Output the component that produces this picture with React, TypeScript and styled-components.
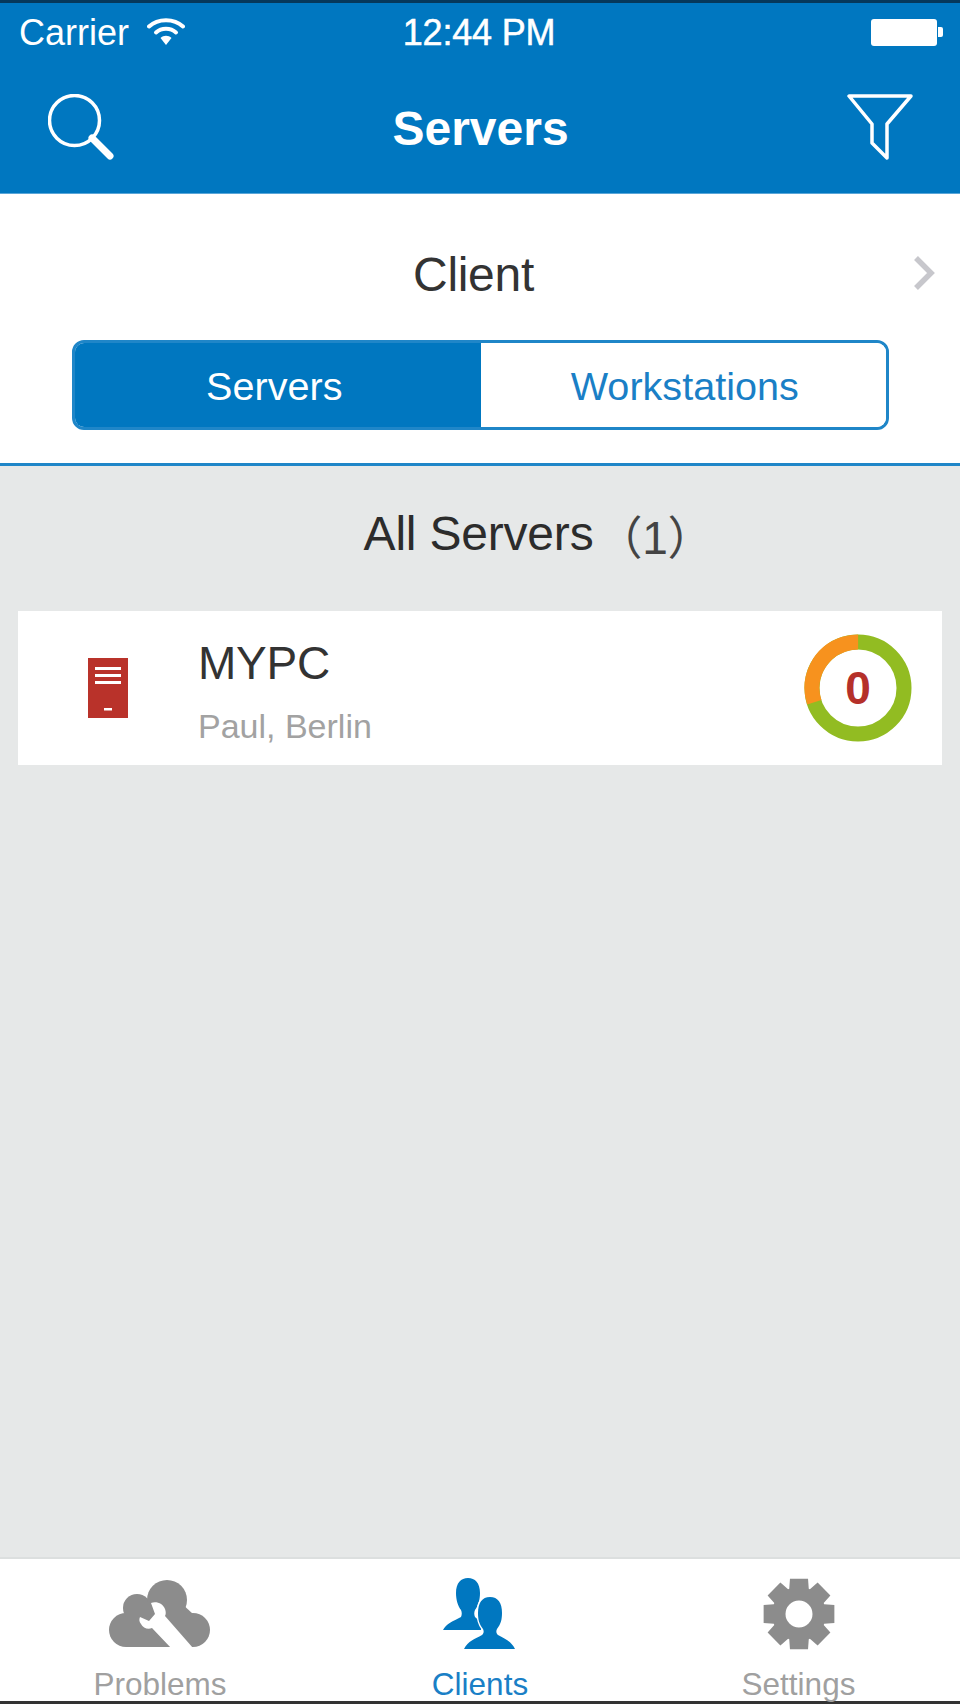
import React from "react";
import styled, { createGlobalStyle } from "styled-components";

const FONT = `"Liberation Sans", "Noto Sans CJK SC", Arial, sans-serif`;
const BLUE = "#0077c0";
const GREY_ICON = "#8c8c8c";

const Global = createGlobalStyle`
  html, body { margin: 0; padding: 0; background: #e6e8e8; }
  * { box-sizing: border-box; }
`;

const Page = styled.div`
  width: 960px;
  height: 1704px;
  display: flex;
  flex-direction: column;
  font-family: ${FONT};
  background: #e6e8e8;
  overflow: hidden;
`;

const Header = styled.header`
  height: 194px;
  flex: none;
  background: ${BLUE};
  border-top: 3px solid #06385a;
  border-bottom: 1px solid #5aa6d8;
  color: #fff;
`;

const StatusBar = styled.div`
  height: 57px;
  padding: 3px 17px 0 19px;
  display: grid;
  grid-template-columns: 1fr auto 1fr;
  align-items: center;
  font-size: 36px;
`;

const Carrier = styled.div`
  display: flex;
  align-items: center;
  gap: 18px;
`;

const WifiSlot = styled.span`
  display: flex;
  margin-top: -3px;
`;

const Clock = styled.div`
  padding-right: 4px;
  font-weight: 400;
  letter-spacing: -0.2px;
  -webkit-text-stroke: 0.5px #fff;
`;

const Battery = styled.div`
  justify-self: end;
  display: flex;
  align-items: center;
  gap: 1px;
  margin-top: -2px;
`;

const BatteryBody = styled.span`
  display: block;
  width: 66px;
  height: 27px;
  background: #fff;
  border-radius: 3px;
`;

const BatteryTip = styled.span`
  display: block;
  width: 5px;
  height: 10px;
  background: #fff;
  border-radius: 0 2px 2px 0;
`;

const NavBar = styled.nav`
  height: 133px;
  padding: 0 47px 0 48px;
  display: grid;
  grid-template-columns: 1fr auto 1fr;
  align-items: center;
`;

const NavTitle = styled.h1`
  margin: 0;
  padding-top: 4px;
  font-size: 48px;
  font-weight: 700;
`;

const NavEnd = styled.div`
  justify-self: end;
  display: flex;
`;

const NavStart = styled.div`
  display: flex;
`;

const FilterPanel = styled.section`
  height: 272px;
  flex: none;
  background: #fff;
  border-bottom: 3px solid #1f86c8;
  padding: 0 71px 0 72px;
`;

const ClientRow = styled.div`
  position: relative;
  height: 146px;
  padding: 14px 14px 0 0;
  display: flex;
  align-items: center;
  justify-content: center;
  font-size: 48px;
  color: #333;
  letter-spacing: -0.3px;
`;

const Chevron = styled.svg`
  position: absolute;
  right: -47px;
  top: 61px;
`;

const Segments = styled.div`
  height: 90px;
  display: grid;
  grid-template-columns: 1fr 1fr;
  border: 3px solid #1f86c8;
  border-radius: 12px;
  overflow: hidden;
`;

const Segment = styled.div<{ $active?: boolean }>`
  display: flex;
  align-items: center;
  justify-content: center;
  padding: ${(p) => (p.$active ? "2px 7px 0 0" : "2px 0 0 3px")};
  font-size: 39.6px;
  background: ${(p) => (p.$active ? BLUE : "#fff")};
  color: ${(p) => (p.$active ? "#fff" : "#1a7fc6")};
`;

const List = styled.main`
  flex: 1;
  padding: 0 18px;
`;

const ListHeading = styled.h2`
  margin: 0;
  height: 145px;
  padding: 0 0 10px 117px;
  display: flex;
  align-items: center;
  justify-content: center;
  font-size: 48px;
  font-weight: 400;
  color: #2c2c2c;
  letter-spacing: -0.2px;
`;

const Count = styled.span`
  padding-left: 3px;
  font-size: 46px;
  color: #444;
`;

const Card = styled.article`
  height: 154px;
  background: #fff;
  padding: 0 30px 0 70px;
  display: flex;
  align-items: center;
`;

const CardText = styled.div`
  flex: 1;
  margin-left: 70px;
  display: flex;
  flex-direction: column;
  gap: 20px;
  padding-top: 8px;
`;

const CardTitle = styled.div`
  font-size: 46px;
  line-height: 48px;
  color: #333;
  letter-spacing: -0.2px;
`;

const CardSub = styled.div`
  font-size: 34px;
  line-height: 38px;
  color: #a2a2a2;
`;

const Donut = styled.div`
  position: relative;
  width: 108px;
  height: 108px;
  flex: none;
`;

const DonutValue = styled.span`
  position: absolute;
  inset: 0;
  display: flex;
  align-items: center;
  justify-content: center;
  font-size: 46px;
  font-weight: 700;
  color: #b5302a;
`;

const TabBar = styled.footer`
  height: 147px;
  flex: none;
  background: #fff;
  border-top: 2px solid #dcdfdf;
  border-bottom: 3px solid #333;
  display: grid;
  grid-template-columns: repeat(3, 1fr);
`;

const Tab = styled.div<{ $active?: boolean }>`
  padding-top: 9px;
  display: flex;
  flex-direction: column;
  align-items: center;
  color: ${(p) => (p.$active ? "#1a7fc6" : "#a0a0a0")};
  font-size: 31.5px;
  line-height: 34px;

  &:last-child {
    padding-right: 3px;
  }
`;

const TabIcon = styled.div`
  height: 92px;
  margin-bottom: 7px;
  display: flex;
  align-items: center;
  justify-content: center;
`;

const WifiIcon = () => (
  <svg width="38" height="28" viewBox="0 0 38 28" aria-hidden="true">
    <g fill="none" stroke="#fff" strokeWidth="4" strokeLinecap="round">
      <path d="M2 8.5C11 0 27 0 36 8.5" />
      <path d="M9 14.5C14.5 9.5 23.5 9.5 29 14.5" />
    </g>
    <path d="M13.5 20C16.5 17 21.5 17 24.5 20L19 27Z" fill="#fff" />
  </svg>
);

const SearchIcon = () => (
  <svg width="66" height="66" viewBox="0 0 66 66" aria-hidden="true">
    <circle cx="26.5" cy="26.5" r="25" fill="none" stroke="#fff" strokeWidth="3.5" />
    <path d="M44 44L62 62" stroke="#fff" strokeWidth="7" strokeLinecap="round" />
  </svg>
);

const FilterIcon = () => (
  <svg width="66" height="66" viewBox="0 0 66 66" aria-hidden="true">
    <path
      d="M2 2H64L40 30V64L25 49V30Z"
      fill="none"
      stroke="#fff"
      strokeWidth="3.5"
      strokeLinejoin="round"
    />
  </svg>
);

const ChevronIcon = () => (
  <Chevron width="24" height="36" viewBox="0 0 24 36" aria-hidden="true">
    <path d="M4 3L19 18L4 33" fill="none" stroke="#c7c7cc" strokeWidth="5.5" />
  </Chevron>
);

const ServerIcon = () => (
  <svg width="40" height="60" viewBox="0 0 40 60" aria-hidden="true">
    <rect width="40" height="60" fill="#b9322a" />
    <g fill="#fff">
      <rect x="7" y="9" width="26" height="3" />
      <rect x="7" y="16" width="26" height="3" />
      <rect x="7" y="23" width="26" height="3" />
      <rect x="16" y="50" width="8" height="2.5" />
    </g>
  </svg>
);

const StatusRing = () => {
  const r = 46;
  const circumference = 2 * Math.PI * r;
  const warning = 0.3;
  return (
    <svg width="108" height="108" viewBox="0 0 108 108" aria-hidden="true">
      <circle cx="54" cy="54" r={r} fill="none" stroke="#92bc22" strokeWidth="15" />
      <circle
        cx="54"
        cy="54"
        r={r}
        fill="none"
        stroke="#f7921e"
        strokeWidth="15"
        strokeDasharray={`${circumference * warning} ${circumference}`}
        transform={`rotate(${-90 - 360 * warning} 54 54)`}
      />
    </svg>
  );
};

const CloudIcon = () => (
  <svg width="102" height="68" viewBox="0 0 102 68" aria-hidden="true">
    <g fill={GREY_ICON}>
      <circle cx="17" cy="50" r="17" />
      <circle cx="28" cy="28" r="14" />
      <circle cx="58" cy="20" r="20" />
      <circle cx="84" cy="50" r="17" />
      <path d="M17 36H84V67H17Z" />
      <path d="M28 28L58 10L84 34V50H28Z" />
    </g>
    <path
      d="M42 23C48 21 54 24 56 29C57 32 57 34 56 36L84 68H62L43 48C39 50 34 48 32 44C30 42 30 39 31 37L40 41L46 34Z"
      fill="#fff"
    />
  </svg>
);

const ClientsIcon = () => (
  <svg width="74" height="74" viewBox="0 0 74 74" aria-hidden="true">
    <g fill={BLUE}>
      <path d="M0 53C3 47 10 44 18 40C19 38 19 35 18 33C15 29 13 23 13 16C13 6 18 1 25 1C32 1 37 6 37 16C37 23 35 29 32 33C31 35 31 38 32 40C36 43 39 47 38 53Z" />
      <path
        d="M21 72C25 64 32 62 39 58C41 56 41 54 40 52C36 47 35 42 35 36C35 26 39 20 47 20C55 20 59 26 59 36C59 42 58 47 54 52C53 54 53 56 55 58C62 62 68 64 72 72Z"
        stroke="#fff"
        strokeWidth="3"
        paintOrder="stroke"
      />
    </g>
  </svg>
);

const gearPath = () => {
  const cx = 37;
  const cy = 37;
  const points: string[] = [];
  for (let i = 0; i < 8; i += 1) {
    const a = (i * Math.PI) / 4 - Math.PI / 2;
    const at = (radius: number, offset: number) =>
      `${(cx + radius * Math.cos(a + offset)).toFixed(2)} ${(cy + radius * Math.sin(a + offset)).toFixed(2)}`;
    points.push(at(27, -0.37), at(36.5, -0.25), at(36.5, 0.25), at(27, 0.37));
  }
  return `M${points.join("L")}Z M${cx + 13.5} ${cy}A13.5 13.5 0 1 0 ${cx - 13.5} ${cy}A13.5 13.5 0 1 0 ${cx + 13.5} ${cy}Z`;
};

const GearIcon = () => (
  <svg width="74" height="74" viewBox="0 0 74 74" aria-hidden="true">
    <path d={gearPath()} fill={GREY_ICON} fillRule="evenodd" />
  </svg>
);

export default function App() {
  return (
    <Page>
      <Global />
      <Header>
        <StatusBar>
          <Carrier>
            Carrier
            <WifiSlot>
              <WifiIcon />
            </WifiSlot>
          </Carrier>
          <Clock>12:44 PM</Clock>
          <Battery>
            <BatteryBody />
            <BatteryTip />
          </Battery>
        </StatusBar>
        <NavBar>
          <NavStart>
            <SearchIcon />
          </NavStart>
          <NavTitle>Servers</NavTitle>
          <NavEnd>
            <FilterIcon />
          </NavEnd>
        </NavBar>
      </Header>

      <FilterPanel>
        <ClientRow>
          Client
          <ChevronIcon />
        </ClientRow>
        <Segments>
          <Segment $active>Servers</Segment>
          <Segment>Workstations</Segment>
        </Segments>
      </FilterPanel>

      <List>
        <ListHeading>
          All Servers
          <Count>（1）</Count>
        </ListHeading>
        <Card>
          <ServerIcon />
          <CardText>
            <CardTitle>MYPC</CardTitle>
            <CardSub>Paul, Berlin</CardSub>
          </CardText>
          <Donut>
            <StatusRing />
            <DonutValue>0</DonutValue>
          </Donut>
        </Card>
      </List>

      <TabBar>
        <Tab>
          <TabIcon>
            <CloudIcon />
          </TabIcon>
          Problems
        </Tab>
        <Tab $active>
          <TabIcon>
            <ClientsIcon />
          </TabIcon>
          Clients
        </Tab>
        <Tab>
          <TabIcon>
            <GearIcon />
          </TabIcon>
          Settings
        </Tab>
      </TabBar>
    </Page>
  );
}
